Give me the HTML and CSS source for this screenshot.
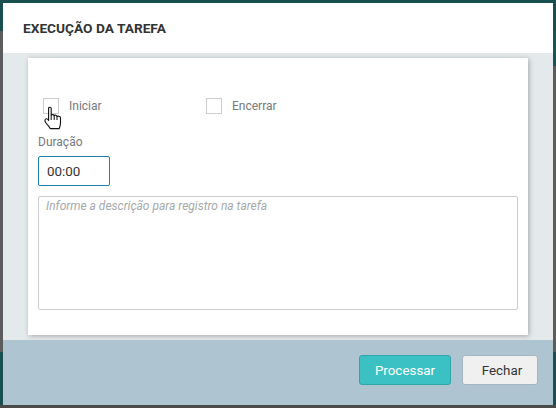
FILE: index.html
```html
<!DOCTYPE html>
<html lang="pt">
<head>
<meta charset="utf-8">
<title>Execução da tarefa</title>
<link rel="stylesheet" href="styles.css">
</head>
<body>
<div class="modal">
  <header class="modal-header"><h1 class="modal-title">EXECUÇÃO DA TAREFA</h1></header>
  <div class="modal-body">
    <section class="card">
      <div class="checks">
        <label class="check check-start"><span class="box"></span><span class="check-label">Iniciar</span></label>
        <label class="check"><span class="box"></span><span class="check-label">Encerrar</span></label>
        <svg class="cursor" width="18" height="24" viewBox="0 0 18 24" aria-hidden="true">
          <path d="M4.6 2.4C4.6 .8 7.2 .8 7.2 2.4V9.2C7.8 8.2 10 8.4 10.2 9.8C10.8 8.8 12.8 9 13 10.6C13.8 9.8 16.5 10 16.5 12V17C16.5 19 16 20.4 15.2 22.6H6.2C5.4 20.4 3.6 19.4 1.8 16.8C.6 15 .6 13.2 2.2 12.8C3 12.6 3.8 13.2 4.6 14.4Z" fill="#fff" stroke="#111" stroke-width="1.1" stroke-linejoin="round"/>
          <path d="M7.2 9.2V14M10.2 9.8V14M13 10.6V14" fill="none" stroke="#111" stroke-width="1"/>
        </svg>
      </div>
      <div class="field-label">Duração</div>
      <input class="time" type="text" value="00:00" aria-label="Duração">
      <textarea class="desc" placeholder="Informe a descrição para registro na tarefa"></textarea>
    </section>
  </div>
  <footer class="modal-footer">
    <button class="btn btn-primary" type="button">Processar</button>
    <button class="btn btn-light" type="button">Fechar</button>
  </footer>
</div>
</body>
</html>
```
FILE: styles.css
```css
* { box-sizing: border-box; }
html, body { height: 100%; }
body {
  margin: 0;
  height: 408px;
  overflow: hidden;
  padding: 3px;
  font-family: Roboto, "Liberation Sans", sans-serif;
  background:
    linear-gradient(#1a4f4f 0 31px, #5c5c5c 31px 352px, #1a4f4f 352px 405px, #4a4a4a 405px) left / 3px 100% no-repeat,
    linear-gradient(#1a4f4f 0 31px, #1a5555 31px 66px, #5c5c5c 66px 352px, #1a4f4f 352px 405px, #4a4a4a 405px) right / 3px 100% no-repeat,
    linear-gradient(#4a4a4a, #4a4a4a) bottom / 100% 3px no-repeat,
    #1a4f4f;
}
.modal {
  width: 550px;
  height: 402px;
  display: flex;
  flex-direction: column;
  background: #fff;
}
.modal-header {
  height: 50px;
  flex: none;
  display: flex;
  align-items: center;
  padding-left: 20px;
  background: #fff;
}
.modal-title {
  margin: 0;
  font-size: 13.7px;
  font-weight: 700;
  color: #333;
}
.modal-body {
  height: 287px;
  flex: none;
  padding: 5px 25px;
  background: #e4e9ec;
}
.card {
  height: 277px;
  padding: 39px 10px 0;
  background: #fff;
  box-shadow: 1px 1px 5px rgba(0, 0, 0, .28);
}
.checks {
  position: relative;
  display: flex;
  height: 18px;
  padding-left: 5px;
}
.check { display: flex; align-items: center; }
.check-start { width: 163px; }
.box {
  width: 16px;
  height: 16px;
  border: 1px solid #ccc;
  background: #fff;
}
.check-label {
  margin-left: 10px;
  font-size: 12px;
  color: #74797d;
}
.cursor {
  position: absolute;
  left: 6px;
  top: 9px;
}
.field-label {
  margin-top: 18px;
  height: 18px;
  font-size: 12px;
  line-height: 18px;
  color: #74797d;
}
.time {
  display: block;
  width: 72px;
  height: 30px;
  margin-top: 5px;
  padding: 0 8px;
  border: 1px solid #1f7fb0;
  border-radius: 2px;
  outline: 0;
  font: 13.4px Roboto, "Liberation Sans", sans-serif;
  color: #333;
}
.desc {
  display: block;
  width: 480px;
  height: 114px;
  margin-top: 10px;
  padding: 2px 7px;
  border: 1px solid #ccc;
  border-radius: 2px;
  outline: 0;
  resize: none;
  font: italic 12px Roboto, "Liberation Sans", sans-serif;
  background: #fff;
}
.desc::placeholder { color: #a5a9ac; opacity: 1; }
.modal-footer {
  height: 65px;
  flex: none;
  display: flex;
  justify-content: flex-end;
  align-items: flex-start;
  gap: 11px;
  padding: 15px 15px 0 0;
  background: #aec4d1;
}
.btn {
  height: 30px;
  border-radius: 3px;
  font: 13.4px Roboto, "Liberation Sans", sans-serif;
  padding: 0;
}
.btn-primary {
  width: 92px;
  color: #fff;
  background: #3bc1c4;
  border: 1px solid #2ea5a8;
}
.btn-light {
  width: 76px;
  padding-left: 4px;
  color: #333;
  background: #f0f0f0;
  border: 1px solid #a3b6c2;
}
```
